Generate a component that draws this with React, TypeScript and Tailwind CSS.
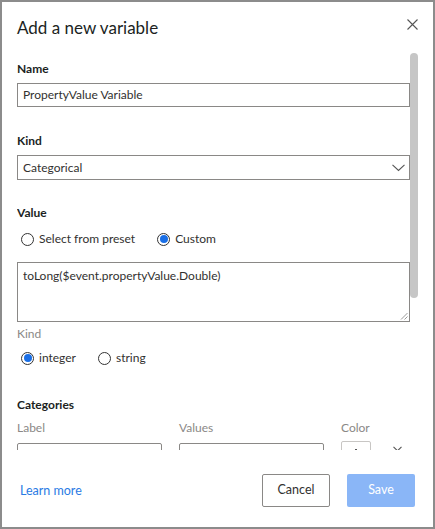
import React from "react";

const font = { fontFamily: 'Lato, "Open Sans", sans-serif' };

function Radio({ checked, label }: { checked?: boolean; label: string }) {
  return (
    <div className="flex items-center">
      <div className="w-[13px] h-[13px] rounded-full border border-[#333333] flex items-center justify-center bg-white">
        {checked && <div className="w-[8px] h-[8px] rounded-full bg-[#1a6fe6]" />}
      </div>
      <span className="ml-[5px] text-[12px] leading-5 text-[#323130]">{label}</span>
    </div>
  );
}

export default function App() {
  return (
    <div style={font} className="w-[435px] h-[529px] bg-white border-2 border-[#8c8c8c] flex flex-col">
      {/* Header */}
      <div className="h-[48px] flex justify-between pl-[15px] pr-[15px]">
        <h1 className="pt-[12px] text-[17px] leading-7 text-[#201f1e] font-normal">Add a new variable</h1>
        <button className="mt-[16px] w-[12px] h-[12px] flex items-center justify-center text-[#323130]">
          <svg width="11" height="11" viewBox="0 0 11 11" fill="none" stroke="#555" strokeWidth="1.1">
            <path d="M0.5 0.5 L10.5 10.5 M10.5 0.5 L0.5 10.5" />
          </svg>
        </button>
      </div>

      {/* Body */}
      <div className="h-[400px] flex pl-[15px]">
        <div className="w-[393px] h-full overflow-hidden flex flex-col">
          <div className="mt-[9px] text-[12px] leading-5 font-bold text-[#201f1e]">Name</div>
          <div className="mt-[4px] h-[24px] border border-[#8a8886] flex items-center px-[5px] text-[12px] text-[#323130] shrink-0">
            PropertyValue Variable
          </div>

          <div className="mt-[24px] text-[12px] leading-5 font-bold text-[#201f1e]">Kind</div>
          <div className="mt-[4px] h-[25px] border border-[#8a8886] flex items-center justify-between pl-[5px] pr-[4px] text-[12px] text-[#323130] shrink-0">
            <span>Categorical</span>
            <svg width="13" height="8" viewBox="0 0 13 8" fill="none" stroke="#555" strokeWidth="1.1">
              <path d="M0.5 0.8 L6.5 6.5 L12.5 0.8" />
            </svg>
          </div>

          <div className="mt-[23px] text-[12px] leading-5 font-bold text-[#201f1e]">Value</div>
          <div className="mt-[6px] h-[20px] flex items-center pl-[4px] gap-[22px] shrink-0">
            <Radio label="Select from preset" />
            <Radio checked label="Custom" />
          </div>

          <div className="mt-[13px] h-[60px] border border-[#8a8886] relative px-[5px] pt-[3px] text-[12px] leading-5 text-[#323130] shrink-0">
            toLong($event.propertyValue.Double)
            <svg className="absolute right-[1px] bottom-[1px]" width="8" height="8" viewBox="0 0 8 8" stroke="#999" strokeWidth="1">
              <path d="M7.5 1 L1 7.5 M7.5 4.5 L4.5 7.5" />
            </svg>
          </div>

          <div className="mt-[3px] text-[12px] leading-[18px] text-[#8a8886]">Kind</div>
          <div className="mt-[5px] h-[20px] flex items-center pl-[4px] gap-[22px] shrink-0">
            <Radio checked label="integer" />
            <Radio label="string" />
          </div>

          <div className="mt-[27px] text-[12px] leading-5 font-bold text-[#201f1e]">Categories</div>
          <div className="mt-[4px] flex text-[12px] leading-[18px] text-[#8a8886]">
            <div className="w-[162px]">Label</div>
            <div className="w-[162px]">Values</div>
            <div>Color</div>
          </div>
          <div className="mt-[6px] flex items-start shrink-0">
            <div className="w-[145px] h-[30px] border border-[#8a8886] rounded-[2px] shrink-0" />
            <div className="ml-[17px] w-[145px] h-[30px] border border-[#8a8886] rounded-[2px] shrink-0" />
            <div className="ml-[17px] -mt-[2px] w-[30px] h-[30px] border border-[#c8c6c4] rounded-[2px] shrink-0 flex justify-center pt-[7px]">
              <div className="w-[2px] h-[2px] bg-[#555]" />
            </div>
            <svg className="ml-[22px] mt-[3px]" width="9" height="6" viewBox="0 0 9 6" fill="none" stroke="#555" strokeWidth="1.1">
              <path d="M0.5 0.8 L4.5 4.8 L8.5 0.8" />
            </svg>
          </div>
        </div>
        <div className="w-[8px] h-full">
          <div className="mt-[3px] h-[245px] w-[8px] rounded-full bg-[#c6c6c6]" />
        </div>
      </div>

      {/* Footer */}
      <div className="flex-1 flex items-start pt-[24px] pl-[18px] pr-[18px]">
        <a className="mt-[7px] text-[12.5px] leading-5 text-[#2a7be4] cursor-pointer">Learn more</a>
        <div className="ml-auto flex gap-[17px]">
          <button className="w-[68px] h-[33px] border border-[#8a8886] rounded-[2px] text-[12.5px] text-[#323130] bg-white">Cancel</button>
          <button className="w-[68px] h-[33px] rounded-[2px] text-[12.5px] text-white bg-[#8ab6f7]">Save</button>
        </div>
      </div>
    </div>
  );
}
